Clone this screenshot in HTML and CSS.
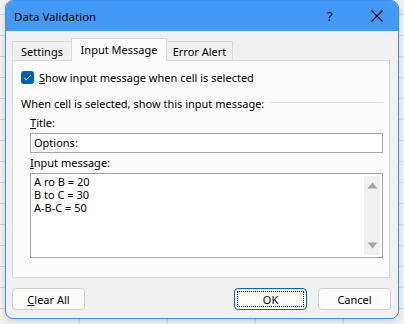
FILE: index.html
```html
<!DOCTYPE html>
<html>
<head>
<meta charset="utf-8">
<link rel="stylesheet" href="styles.css">
</head>
<body>
<div class="dialog">
  <div class="titlebar">
    <span class="title">Data Validation</span>
    <span class="help">?</span>
    <svg class="close" width="14" height="14" viewBox="0 0 14 14"><path d="M1.5 1.5 L12.5 12.5 M12.5 1.5 L1.5 12.5" stroke="#000" stroke-width="1.1" fill="none"/></svg>
  </div>
  <div class="content">
    <div class="tabs">
      <div class="tab t1">Settings</div>
      <div class="tab active">Input Message</div>
      <div class="tab t3">Error Alert</div>
    </div>
    <div class="panel">
      <div class="checkrow">
        <span class="check"><svg width="13" height="13" viewBox="0 0 13 13"><path d="M3.3 6.8 L5.4 8.8 L9.8 4.2" stroke="#fff" stroke-width="1" fill="none"/></svg></span>
        <span><u>S</u>how input message when cell is selected</span>
      </div>
      <div class="group"><span>When cell is selected, show this input message:</span><span class="rule"></span></div>
      <div class="field">
        <div class="label"><u>T</u>itle:</div>
        <div class="input">Options:</div>
        <div class="label lbl2"><u>I</u>nput message:</div>
        <div class="textarea">
          <div class="text">
            <div class="line">A ro B = 20</div>
            <div class="line">B to C = 30</div>
            <div class="line">A-B-C = 50</div>
          </div>
          <div class="scroll">
            <svg width="11" height="7" viewBox="0 0 11 7"><path d="M5.5 0.5 L10.5 6.5 L0.5 6.5 Z" fill="#a3a3a3"/></svg>
            <svg width="11" height="7" viewBox="0 0 11 7"><path d="M0.5 0.5 L10.5 0.5 L5.5 6.5 Z" fill="#a3a3a3"/></svg>
          </div>
        </div>
      </div>
    </div>
    <div class="buttons">
      <div class="btn"><u>C</u>lear All</div>
      <div class="spacer"></div>
      <div class="btn ok"><span class="focus">OK</span></div>
      <div class="btn cancel">Cancel</div>
    </div>
  </div>
</div>
</body>
</html>
```
FILE: styles.css
```css
html, body {
  margin: 0;
  padding: 0;
}
body {
  width: 404px;
  height: 324px;
  overflow: hidden;
  font-family: "Noto Sans", "Open Sans", sans-serif;
  font-size: 11px;
  color: #000;
  background-color: #f2f2f2;
  background-image:
    repeating-linear-gradient(to bottom, transparent 0, transparent 14px, #d4d4d4 14px, #d4d4d4 15px, transparent 15px, transparent 21px),
    repeating-linear-gradient(to right, transparent 0, transparent 79px, #d4d4d4 79px, #d4d4d4 80px, transparent 80px, transparent 88px);
}
.dialog {
  margin-left: 5px;
  width: 392px;
  height: 317px;
  border: 1px solid #3d92ee;
  border-radius: 8px;
  overflow: hidden;
  background: #f0f0f0;
  display: flex;
  flex-direction: column;
  box-shadow: 0 2px 6px rgba(0,0,0,0.15);
}
.titlebar {
  height: 30px;
  background: #4299f6;
  display: flex;
  align-items: center;
  padding-left: 8px;
  flex: none;
}
.title {
  flex: 1;
  font-size: 11.5px;
}
.help {
  font-size: 13px;
  width: 20px;
  margin-right: 23px;
}
.close {
  margin-right: 14px;
}
.content {
  flex: 1;
  display: flex;
  flex-direction: column;
  padding: 7px 8px 9px 6px;
}
.tabs {
  display: flex;
  align-items: flex-end;
  height: 22px;
  flex: none;
}
.tab {
  height: 19px;
  box-sizing: border-box;
  border: 1px solid #d9d9d9;
  border-bottom: none;
  background: #f0f0f0;
  display: flex;
  align-items: center;
  justify-content: center;
}
.t1 { width: 59px; border-right: none; }
.t3 { width: 66px; border-left: none; }
.tab.active {
  height: 23px;
  width: 96px;
  background: #fcfcfc;
  position: relative;
  top: 1px;
  z-index: 1;
  padding-bottom: 2px;
}
.panel {
  height: 218px;
  box-sizing: border-box;
  border: 1px solid #d9d9d9;
  background: #fcfcfc;
  padding: 10px 6px 0 8px;
  flex: none;
}
.checkrow {
  display: flex;
  align-items: center;
  height: 13px;
}
.check {
  width: 13px;
  height: 13px;
  background: #005fb8;
  border-radius: 3px;
  margin-right: 5px;
  display: flex;
}
.group {
  display: flex;
  align-items: center;
  margin-top: 12px;
  height: 14px;
}
.rule {
  flex: 1;
  height: 1px;
  background: #dcdcdc;
  margin-left: 6px;
  margin-top: -1px;
}
.field {
  padding-left: 9px;
}
.label {
  margin-top: 5px;
  height: 16px;
  line-height: 16px;
}
.lbl2 {
  margin-top: 2px;
}
.input {
  margin-top: 2px;
  height: 20px;
  box-sizing: border-box;
  border: 1px solid #a5a5a5;
  background: #fff;
  padding-left: 3px;
  line-height: 18px;
}
.textarea {
  margin-top: 2px;
  height: 85px;
  box-sizing: border-box;
  border: 1px solid #a5a5a5;
  background: #fff;
  display: flex;
  padding: 1px 2px 2px 3px;
}
.text {
  flex: 1;
}
.line {
  height: 13px;
  line-height: 13px;
}
.scroll {
  width: 16px;
  background: #f0f0f0;
  display: flex;
  flex-direction: column;
  justify-content: space-between;
  align-items: center;
  padding: 6px 0 6px;
  margin-top: 1px;
}
.buttons {
  display: flex;
  margin-top: 10px;
  height: 22px;
}
.spacer { flex: 1; }
.btn {
  width: 73px;
  height: 22px;
  box-sizing: border-box;
  border: 1px solid #d0d0d0;
  border-radius: 4px;
  background: #fdfdfd;
  display: flex;
  align-items: center;
  justify-content: center;
}
.ok {
  border-color: #0067c0;
  padding: 2px;
  margin-right: 11px;
}
.focus {
  flex: 1;
  align-self: stretch;
  border: 1px dotted #000;
  display: flex;
  align-items: center;
  justify-content: center;
}
.cancel { margin-right: -1px; }
```
